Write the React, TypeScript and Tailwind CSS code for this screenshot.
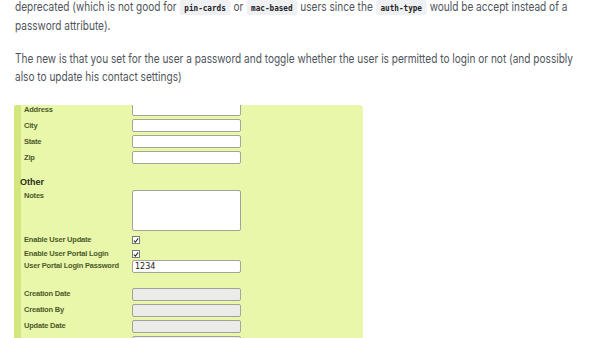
import React from "react";

const Code = ({ children }: { children: React.ReactNode }) => (
  <code className="rounded-[3px] bg-[#eef0f3] px-[6px] py-[2px] font-['DejaVu_Sans_Mono',monospace] text-[9.5px] font-bold text-[#222]">
    {children}
  </code>
);

const Label = ({ children }: { children: React.ReactNode }) => (
  <div className="w-[108px] shrink-0 whitespace-nowrap font-['Liberation_Sans',sans-serif] text-[7.5px] font-bold tracking-[-0.2px] text-[#4a5a28]">
    {children}
  </div>
);

const Input = ({ value = "", disabled = false, h = "h-[13px]" }: { value?: string; disabled?: boolean; h?: string }) => (
  <div
    className={`w-[109px] ${h} rounded-[2px] border border-[#a3a39a] ${
      disabled ? "bg-[#ebebe8]" : "bg-white"
    } px-[2px] font-['DejaVu_Sans',sans-serif] text-[8px] leading-[11px] text-[#222]`}
  >
    {value}
  </div>
);

const Check = () => (
  <div className="flex h-[8px] w-[8px] items-center justify-center border border-[#777] bg-white">
    <svg width="7" height="7" viewBox="0 0 7 7">
      <path d="M1 3.5 L2.8 5.5 L6 1" stroke="#222" strokeWidth="1.2" fill="none" />
    </svg>
  </div>
);

const Row = ({ label, children, cls = "" }: { label: string; children: React.ReactNode; cls?: string }) => (
  <div className={`flex items-center ${cls}`}>
    <Label>{label}</Label>
    {children}
  </div>
);

export default function App() {
  return (
    <div className="h-[338px] w-[600px] overflow-hidden bg-white">
      <div className="ml-[15px] w-[705px] origin-top-left scale-x-[0.807] font-['Inter',sans-serif] text-[12.5px] leading-[18px] text-[#50555c]">
        <p className="-mt-[2px]">
          deprecated (which is not good for <Code>pin-cards</Code> or <Code>mac-based</Code> users since the{" "}
          <Code>auth-type</Code> would be accept instead of a password attribute).
        </p>
        <p className="mt-[15px]">
          The new is that you set for the user a password and toggle whether the user is permitted to login or not (and possibly also to update his contact settings)
        </p>
      </div>
      <div className="ml-[14px] mt-[19px] flex h-[250px] w-[349px] overflow-hidden rounded-tr-[4px] rounded-tl-[2px] bg-[#e9f7aa]">
        <div className="w-[7px] shrink-0 rounded-tl-[2px] bg-[#d3e77e]" />
        <div className="flex flex-col pl-[3px]">
          <div className="-mt-[2px] flex flex-col gap-[3px]">
            <Row label="Address"><Input /></Row>
            <Row label="City"><Input /></Row>
            <Row label="State"><Input /></Row>
            <Row label="Zip"><Input /></Row>
          </div>
          <div className="-ml-[4px] mt-[12px] font-['Liberation_Sans',sans-serif] text-[9px] font-bold text-[#2a3018]">Other</div>
          <div className="flex items-start">
            <Label>Notes</Label>
            <Input h="h-[41px]" />
          </div>
          <Row label="Enable User Update" cls="mt-[5px] h-[9px]"><Check /></Row>
          <Row label="Enable User Portal Login" cls="mt-[5px] h-[9px]"><Check /></Row>
          <Row label="User Portal Login Password" cls="mt-[1px]"><Input value="1234" /></Row>
          <div className="mt-[15px] flex flex-col gap-[3px]">
            <Row label="Creation Date"><Input disabled /></Row>
            <Row label="Creation By"><Input disabled /></Row>
            <Row label="Update Date"><Input disabled /></Row>
            <Row label="Update By"><Input disabled /></Row>
          </div>
        </div>
      </div>
    </div>
  );
}
